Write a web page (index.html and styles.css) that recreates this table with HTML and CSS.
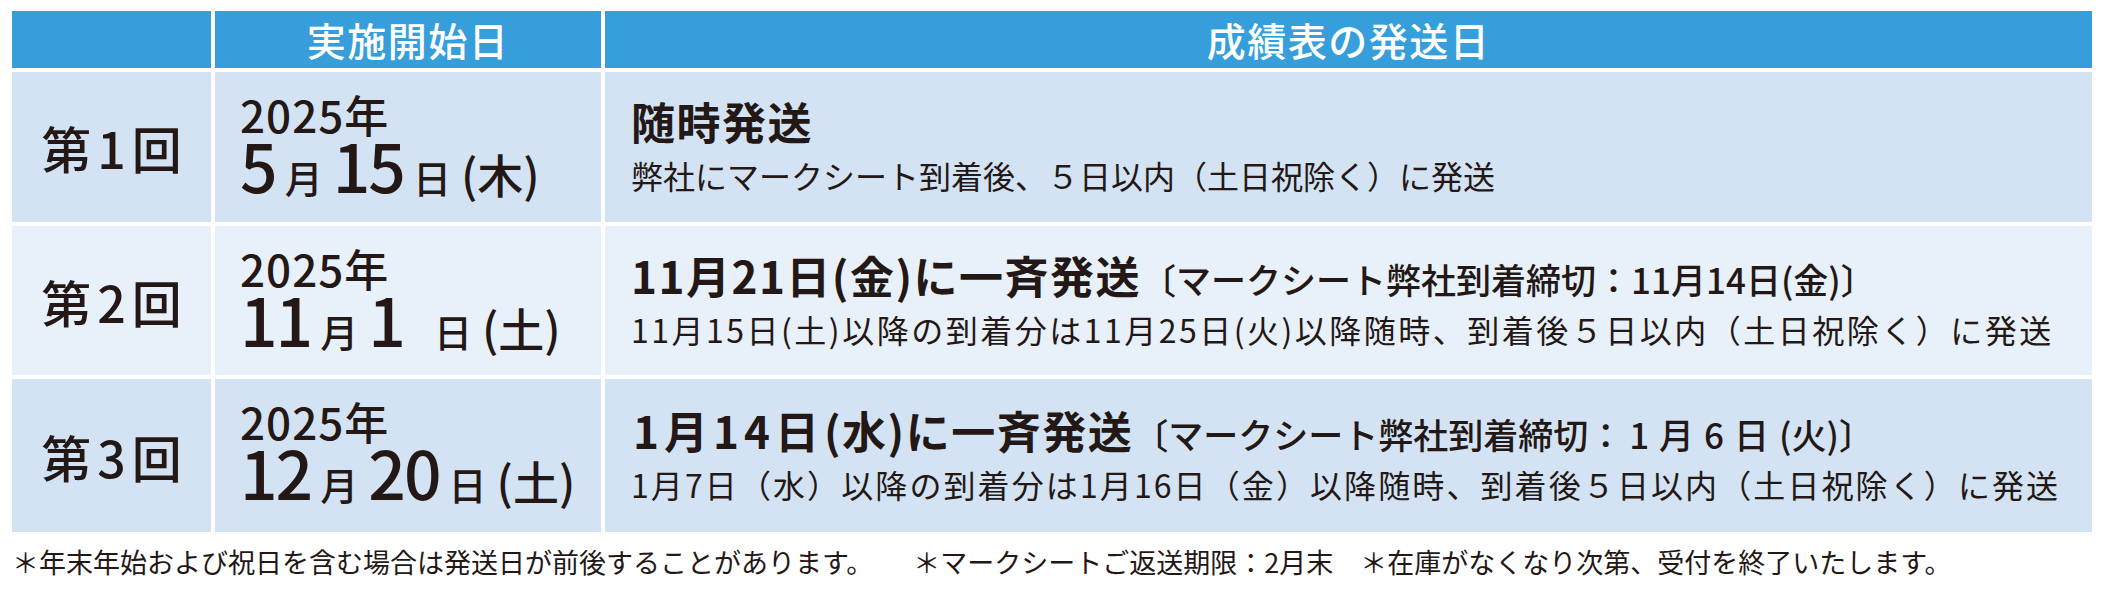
FILE: index.html
```html
<!DOCTYPE html>
<html lang="ja">
<head>
<meta charset="utf-8">
<title>成績表の発送日</title>
<link rel="stylesheet" href="styles.css">
</head>
<body>
<div class="sheet">
  <div class="schedule">
    <div class="cell head"></div>
    <div class="cell head">実施開始日</div>
    <div class="cell head">成績表の発送日</div>

    <div class="cell round tone-a">第<span class="rnum">1</span>回</div>
    <div class="cell date tone-a">
      <div class="year">2025年</div>
      <div class="day"><span class="big">5</span><span class="unit">月</span><span class="big">15</span><span class="unit">日</span><span class="wd">(木)</span></div>
    </div>
    <div class="cell send tone-a">
      <div class="lead">随時発送</div>
      <div class="note note-1">弊社にマークシート到着後、５日以内（土日祝除く）に発送</div>
    </div>

    <div class="cell round tone-b">第<span class="rnum">2</span>回</div>
    <div class="cell date tone-b">
      <div class="year">2025年</div>
      <div class="day"><span class="big">11</span><span class="unit">月</span><span class="big wide">1</span><span class="unit">日</span><span class="wd">(土)</span></div>
    </div>
    <div class="cell send tone-b">
      <div class="lead">11月21日(金)に一斉発送<span class="cut">〔マークシート弊社到着締切：11月14日(金)〕</span></div>
      <div class="note note-2">11月15日(土)以降の到着分は11月25日(火)以降随時、到着後５日以内（土日祝除く）に発送</div>
    </div>

    <div class="cell round tone-a">第<span class="rnum">3</span>回</div>
    <div class="cell date tone-a">
      <div class="year">2025年</div>
      <div class="day"><span class="big">12</span><span class="unit">月</span><span class="big">20</span><span class="unit">日</span><span class="wd">(土)</span></div>
    </div>
    <div class="cell send tone-a">
      <div class="lead lead-wide"><span class="spaced">1月14日</span>(水)に一斉発送<span class="cut">〔マークシート弊社到着締切：<span class="spaced-cut">1月6日</span>(火)〕</span></div>
      <div class="note note-3">1月7日（水）以降の到着分は1月16日（金）以降随時、到着後５日以内（土日祝除く）に発送</div>
    </div>
  </div>

  <div class="foot">
    <span class="foot-item">＊年末年始および祝日を含む場合は発送日が前後することがあります。</span>
    <span class="foot-item foot-mid">＊マークシートご返送期限：2月末</span>
    <span class="foot-item foot-last">＊在庫がなくなり次第、受付を終了いたします。</span>
  </div>
</div>
</body>
</html>
```
FILE: styles.css
```css
html, body {
  margin: 0;
  padding: 0;
  background: #ffffff;
}

body {
  font-family: "Noto Sans CJK JP", "Noto Sans", sans-serif;
  color: #231815;
}

.sheet {
  padding: 11px 0 0 12px;
}

.schedule {
  display: grid;
  grid-template-columns: 199px 386px 1487px;
  grid-template-rows: 57px 150px 149px 153px;
  gap: 4px;
}

.cell {
  box-sizing: border-box;
}

.head {
  background: #369fdb;
  color: #ffffff;
  font-size: 39px;
  font-weight: 500;
  letter-spacing: 1.5px;
  line-height: 57px;
  text-align: center;
  white-space: nowrap;
}

.tone-a {
  background: #d3e3f3;
}

.tone-b {
  background: #e8f0f9;
}

.round {
  display: flex;
  align-items: center;
  justify-content: center;
  font-size: 50px;
  font-weight: 500;
  letter-spacing: 6px;
  padding-left: 6px;
  white-space: nowrap;
}

.date {
  display: flex;
  flex-direction: column;
  justify-content: flex-start;
  padding: 20px 0 0 25px;
  white-space: nowrap;
}

.year {
  font-size: 44px;
  font-weight: 500;
  letter-spacing: 1px;
  line-height: 44px;
}

.day {
  font-size: 66px;
  font-weight: 500;
  line-height: 56px;
}

.big {
  letter-spacing: -2px;
}

.wide {
  margin-right: 21px;
}

.unit {
  font-size: 38px;
  line-height: 1;
  margin: 0 10px 0 9px;
}

.wd {
  font-size: 46px;
  line-height: 1;
}

.send {
  display: flex;
  flex-direction: column;
  justify-content: center;
  padding-left: 26px;
  white-space: nowrap;
}

.lead {
  font-size: 44px;
  font-weight: 700;
  letter-spacing: 1.5px;
  line-height: 56px;
}

.lead-wide {
  padding-left: 2px;
}

.spaced {
  letter-spacing: 5px;
}

.cut {
  font-size: 35px;
  font-weight: 500;
  letter-spacing: 0;
  line-height: 1;
}

.spaced-cut {
  letter-spacing: 10px;
  padding-left: 6px;
}

.note {
  font-size: 32px;
  font-weight: 400;
  line-height: 52px;
}

.note-1 {
  letter-spacing: 0;
}

.note-2 {
  letter-spacing: 2.5px;
}

.note-3 {
  letter-spacing: 2.1px;
}

.foot {
  display: flex;
  margin-top: 12px;
  font-size: 27px;
  line-height: 36px;
  white-space: nowrap;
}

.foot-mid {
  margin-left: 40px;
}

.foot-last {
  margin-left: 27px;
}
```
